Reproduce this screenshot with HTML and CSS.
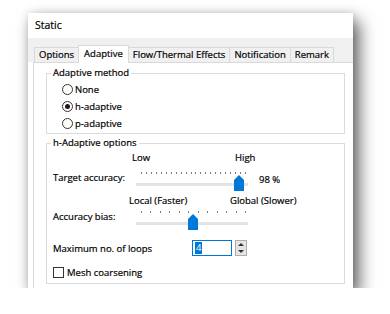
FILE: index.html
```html
<!DOCTYPE html>
<html lang="en">
<head>
    <meta charset="UTF-8">
    <title>Static</title>
    <link rel="stylesheet" href="styles.css">
</head>
<body>
    <div class="dialog">
        <div class="titlebar">Static</div>
        <div class="tabs">
            <div class="tab">Options</div>
            <div class="tab active">Adaptive</div>
            <div class="tab">Flow/Thermal Effects</div>
            <div class="tab">Notification</div>
            <div class="tab">Remark</div>
        </div>
        <div class="pane">
            <fieldset class="group method">
                <legend>Adaptive method</legend>
                <div class="radio"><span class="circle"></span>None</div>
                <div class="radio"><span class="circle checked"></span>h-adaptive</div>
                <div class="radio"><span class="circle"></span>p-adaptive</div>
            </fieldset>

            <fieldset class="group options">
                <legend>h-Adaptive options</legend>
                <div class="scale scale-target">
                    <span class="scale-low">Low</span>
                    <span>High</span>
                </div>
                <div class="slider-row">
                    <span class="row-label">Target accuracy:</span>
                    <div class="slider">
                        <div class="ticks ticks-fine"></div>
                        <div class="track"></div>
                        <svg class="thumb" style="left: 98px" width="10" height="16" viewBox="0 0 10 16">
                            <path d="M0 16 V5 L5 0 L10 5 V16 Z" fill="#0078d7"/>
                        </svg>
                    </div>
                    <span class="value">98 %</span>
                </div>
                <div class="scale scale-bias">
                    <span class="scale-low">Local (Faster)</span>
                    <span>Global (Slower)</span>
                </div>
                <div class="slider-row bias-row">
                    <span class="row-label">Accuracy bias:</span>
                    <div class="slider">
                        <div class="ticks ticks-coarse"></div>
                        <div class="track"></div>
                        <svg class="thumb" style="left: 52px" width="10" height="16" viewBox="0 0 10 16">
                            <path d="M0 16 V5 L5 0 L10 5 V16 Z" fill="#0078d7"/>
                        </svg>
                    </div>
                </div>
                <div class="loops-row">
                    <span class="loops-label">Maximum no. of loops</span>
                    <div class="num-input"><span class="selected">4</span></div>
                    <div class="spinner">
                        <span class="arrow up"></span>
                        <span class="arrow down"></span>
                    </div>
                </div>
                <div class="check-row">
                    <span class="box"></span>Mesh coarsening
                </div>
            </fieldset>
        </div>
    </div>
</body>
</html>
```

FILE: styles.css
```css
body {
    margin: 0;
    background: #fff;
    font-family: "Open Sans", "Noto Sans", sans-serif;
    font-size: 9.5px;
    color: #000;
    -webkit-text-stroke: 0.2px #000;
}
.dialog {
    width: 325px;
    height: 275px;
    margin: 13px 0 0 28px;
    background: #fff;
    display: flex;
    flex-direction: column;
    box-shadow: 6px 8px 16px rgba(0, 0, 0, 0.62), 0 0 8px rgba(0, 0, 0, 0.12);
}
.titlebar {
    height: 25px;
    line-height: 25px;
    padding-left: 7px;
    font-size: 10.5px;
}
.tabs {
    height: 24px;
    background: #f0f0f0;
    display: flex;
    align-items: flex-end;
    padding-left: 6px;
    position: relative;
    z-index: 1;
}
.tab {
    flex-shrink: 0;
    white-space: nowrap;
    height: 15px;
    line-height: 14px;
    padding: 0 4px;
    border: 1px solid #d9d9d9;
    border-bottom: none;
    background: #f0f0f0;
    box-sizing: border-box;
    margin-right: -1px;
}
.tab.active {
    height: 18px;
    line-height: 15px;
    padding: 0 5px 2px;
    margin-bottom: -1px;
    background: #fff;
    position: relative;
    z-index: 2;
}
.pane {
    flex: 1;
    margin-left: 5px;
    border-left: 1px solid #d9d9d9;
    border-top: 1px solid #d9d9d9;
    padding: 4px 0 0 12px;
}
.group {
    margin: 0;
    width: 299px;
    min-width: 0;
    box-sizing: border-box;
    border: 1px solid #dcdcdc;
    padding: 0 0 0 6px;
}
.group legend {
    padding: 0 2px;
    margin-left: -2px;
    line-height: 12px;
}
.method {
    padding-top: 2px;
    padding-bottom: 1px;
}
.radio {
    display: flex;
    align-items: center;
    height: 17px;
    padding-left: 9px;
}
.circle {
    width: 11px;
    height: 11px;
    border: 1px solid #333;
    border-radius: 50%;
    box-sizing: border-box;
    margin-right: 2px;
    display: flex;
    align-items: center;
    justify-content: center;
}
.circle.checked::after {
    content: "";
    width: 5px;
    height: 5px;
    border-radius: 50%;
    background: #1a1a1a;
}
.options {
    margin-top: 3px;
    padding-top: 3px;
    padding-bottom: 5px;
}
.scale {
    display: flex;
    height: 12px;
    line-height: 12px;
}
.scale-target {
    padding-left: 79px;
}
.scale-target .scale-low {
    width: 103px;
}
.scale-bias {
    margin-top: 3px;
    padding-left: 76px;
}
.scale-bias .scale-low {
    width: 101px;
}
.slider-row {
    display: flex;
    align-items: flex-start;
    height: 20px;
    margin-top: 8px;
}
.bias-row {
    margin-top: 4px;
}
.row-label {
    width: 83px;
    line-height: 12px;
}
.slider {
    position: relative;
    width: 112px;
    height: 20px;
}
.ticks {
    height: 2px;
    margin: 0 2px 0 5px;
}
.ticks-fine {
    background: repeating-linear-gradient(to right, #7a7a7a 0 1px, transparent 1px 4.952px);
}
.ticks-coarse {
    background: repeating-linear-gradient(to right, #7a7a7a 0 1px, transparent 1px 9.4545px);
}
.track {
    height: 3px;
    margin-top: 9px;
    background: #e3e3e3;
}
.thumb {
    position: absolute;
    top: 3px;
}
.value {
    margin: 2px 0 0 11px;
    line-height: 12px;
}
.loops-row {
    display: flex;
    align-items: center;
    height: 16px;
    margin-top: 9px;
}
.loops-label {
    width: 139px;
}
.num-input {
    width: 40px;
    height: 16px;
    box-sizing: border-box;
    border: 1px solid #0078d7;
    display: flex;
    align-items: center;
    padding-left: 2px;
}
.selected {
    background: #0078d7;
    color: #fff;
    -webkit-text-stroke: 0;
    line-height: 12px;
    padding: 0 1px;
}
.spinner {
    width: 12px;
    height: 16px;
    margin-left: 3px;
    box-sizing: border-box;
    border: 1px solid #adadad;
    background: #e5e5e5;
    display: flex;
    flex-direction: column;
    align-items: center;
    justify-content: space-around;
}
.arrow {
    width: 0;
    height: 0;
    border-left: 3px solid transparent;
    border-right: 3px solid transparent;
}
.arrow.up {
    border-bottom: 3px solid #333;
}
.arrow.down {
    border-top: 3px solid #333;
}
.check-row {
    display: flex;
    align-items: center;
    height: 12px;
    margin-top: 10px;
}
.box {
    width: 11px;
    height: 11px;
    box-sizing: border-box;
    border: 1px solid #333;
    margin-right: 3px;
}
```
